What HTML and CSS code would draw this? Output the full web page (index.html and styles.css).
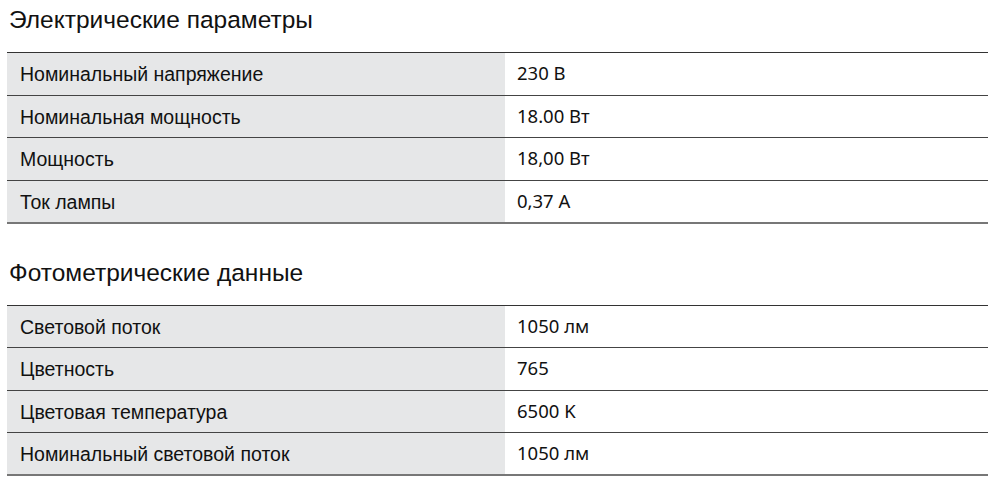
FILE: index.html
```html
<!DOCTYPE html>
<html lang="ru">
<head>
<meta charset="utf-8">
<link rel="stylesheet" href="styles.css">
</head>
<body>
<section class="section">
  <h2 class="title">Электрические параметры</h2>
  <table class="specs">
    <tr><td class="label">Номинальный напряжение</td><td class="value">230 В</td></tr>
    <tr><td class="label">Номинальная мощность</td><td class="value">18.00 Вт</td></tr>
    <tr><td class="label">Мощность</td><td class="value">18,00 Вт</td></tr>
    <tr><td class="label">Ток лампы</td><td class="value">0,37 A</td></tr>
  </table>
</section>
<section class="section second">
  <h2 class="title">Фотометрические данные</h2>
  <table class="specs">
    <tr><td class="label">Световой поток</td><td class="value">1050 лм</td></tr>
    <tr><td class="label">Цветность</td><td class="value">765</td></tr>
    <tr><td class="label">Цветовая температура</td><td class="value">6500 K</td></tr>
    <tr><td class="label">Номинальный световой поток</td><td class="value">1050 лм</td></tr>
  </table>
</section>
</body>
</html>
```

FILE: styles.css
```css
html, body {
  margin: 0;
  padding: 0;
  background: #ffffff;
}
body {
  padding-left: 7px;
  font-family: "Liberation Sans", Arial, sans-serif;
  color: #111;
}
.section {
  width: 981px;
}
.second {
  margin-top: 29px;
}
.title {
  margin: 0 0 12px 2px;
  font-weight: normal;
  font-size: 24.5px;
  line-height: 40px;
  color: #111;
}
.specs {
  width: 981px;
  border-collapse: collapse;
  border-top: 1px solid #333;
  border-bottom: 2px solid #777;
}
.specs tr {
  border-bottom: 1px solid #444;
}
.specs tr:last-child {
  border-bottom: none;
}
.specs td {
  box-sizing: border-box;
  height: 42.5px;
  padding: 0;
  vertical-align: middle;
  font-size: 19.5px;
}
.label {
  width: 498px;
  background: #e6e7e8;
  padding: 2px 0 0 13px !important;
}
.value {
  padding: 0 0 2px 12px !important;
  font-family: "Noto Sans", "Open Sans", sans-serif;
  font-size: 18.5px !important;
}
```
